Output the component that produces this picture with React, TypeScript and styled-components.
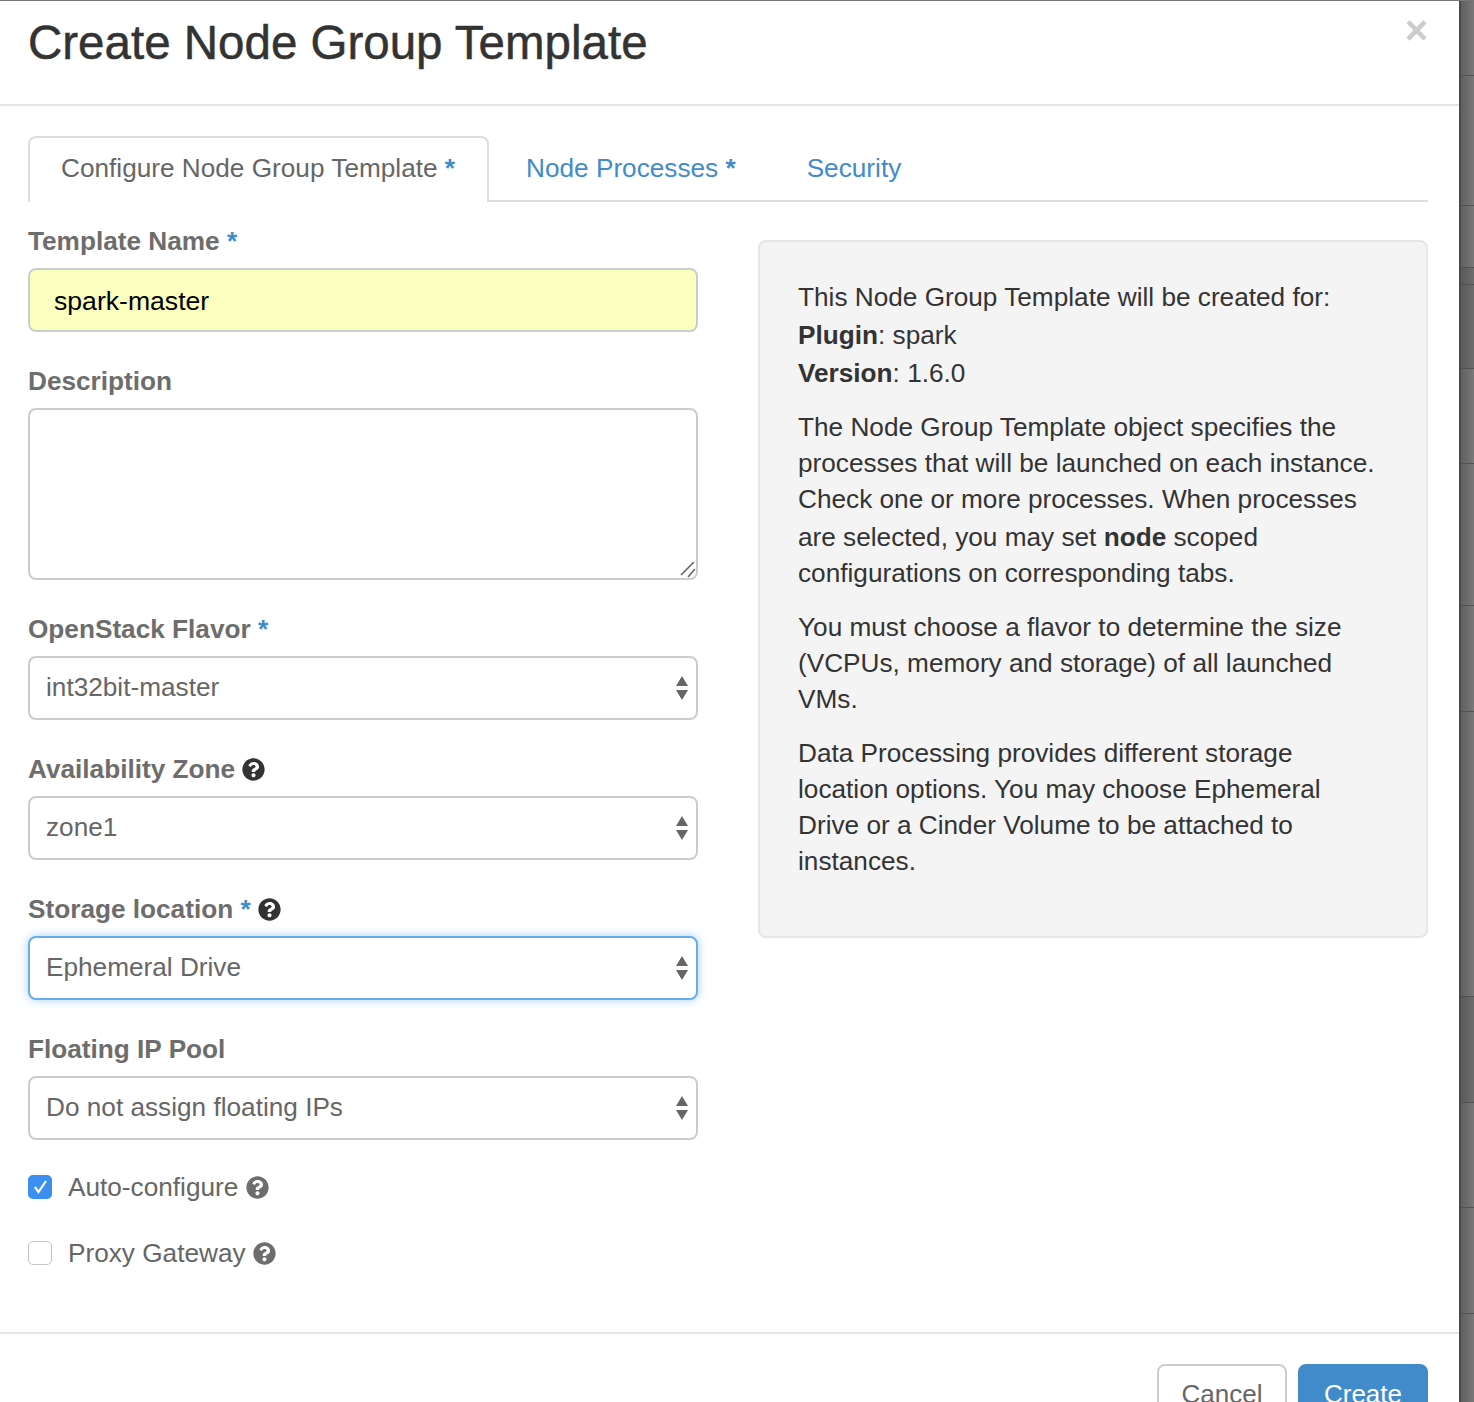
import React from "react";
import styled, { createGlobalStyle } from "styled-components";
import { FaQuestionCircle } from "react-icons/fa";

const GlobalStyle = createGlobalStyle`
	html, body {
		margin: 0;
		padding: 0;
		background: #fff;
	}
	body {
		font-family: "Liberation Sans", Arial, sans-serif;
		color: #333;
		height: 1402px;
		overflow: hidden;
	}
`;

// rows of the page table that show behind the modal
const backdropRows = [
	{ height: 75 },
	{ height: 130 },
	{ height: 62 },
	{ height: 17, dark: true },
	{ height: 84, dark: true },
	{ height: 95 },
	{ height: 142 },
	{ height: 106 },
	{ height: 285 },
	{ height: 106, dark: true },
	{ height: 105 },
	{ height: 106 },
	{ height: 89 },
];

function Help(props: { dark?: boolean }) {
	return (
		<HelpIcon $dark={props.dark}>
			<FaQuestionCircle />
		</HelpIcon>
	);
}

function SelectField(props: { value: string; focused?: boolean }) {
	return (
		<Select $focused={props.focused}>
			<SelectValue>{props.value}</SelectValue>
			<Arrows width="12" height="24" viewBox="0 0 12 24">
				<path d="M6 0 L12 10 H0 Z M0 14 H12 L6 24 Z" fill="#666" />
			</Arrows>
		</Select>
	);
}

export default function App() {
	return (
		<>
			<GlobalStyle />
			<Page>
				<Modal>
					<Header>
						<Title>Create Node Group Template</Title>
						<Close>×</Close>
					</Header>
					<Body>
						<Tabs>
							<Tab $active>
								Configure Node Group Template <Star>*</Star>
							</Tab>
							<Tab>
								Node Processes <Star>*</Star>
							</Tab>
							<Tab>Security</Tab>
						</Tabs>
						<Columns>
							<FormColumn>
								<Group>
									<Label>
										Template Name <Star>*</Star>
									</Label>
									<TextInput>spark-master</TextInput>
								</Group>
								<Group>
									<Label>Description</Label>
									<TextArea>
										<svg width="16" height="16" viewBox="0 0 16 16">
											<path d="M1 13 L14 0 M8 15 L15 7" stroke="#666" strokeWidth="1.6" fill="none" />
										</svg>
									</TextArea>
								</Group>
								<Group>
									<Label>
										OpenStack Flavor <Star>*</Star>
									</Label>
									<SelectField value="int32bit-master" />
								</Group>
								<Group>
									<Label>
										Availability Zone <Help dark />
									</Label>
									<SelectField value="zone1" />
								</Group>
								<Group>
									<Label>
										Storage location <Star>*</Star> <Help dark />
									</Label>
									<SelectField value="Ephemeral Drive" focused />
								</Group>
								<Group>
									<Label>Floating IP Pool</Label>
									<SelectField value="Do not assign floating IPs" />
								</Group>
								<CheckList>
									<CheckRow>
										<CheckBox $checked>
											<svg width="18" height="18" viewBox="0 0 18 18">
												<path d="M4 9 L7.5 14 L15 3" stroke="#fff" strokeWidth="2.2" fill="none" />
											</svg>
										</CheckBox>
										<span>
											Auto-configure <Help />
										</span>
									</CheckRow>
									<CheckRow>
										<CheckBox />
										<span>
											Proxy Gateway <Help />
										</span>
									</CheckRow>
								</CheckList>
							</FormColumn>
							<InfoPanel>
								<Para>
									This Node Group Template will be created for:
									<br />
									<strong>Plugin</strong>: spark
									<br />
									<strong>Version</strong>: 1.6.0
								</Para>
								<Para>
									The Node Group Template object specifies the processes that will be launched on each
									instance. Check one or more processes. When processes are selected, you may set{" "}
									<strong>node</strong> scoped configurations on corresponding tabs.
								</Para>
								<Para>
									You must choose a flavor to determine the size (VCPUs, memory and storage) of all
									launched VMs.
								</Para>
								<Para>
									Data Processing provides different storage location options. You may choose Ephemeral
									Drive or a Cinder Volume to be attached to instances.
								</Para>
							</InfoPanel>
						</Columns>
					</Body>
					<Footer>
						<Button>Cancel</Button>
						<Button $primary>Create</Button>
					</Footer>
				</Modal>
				<Backdrop>
					{backdropRows.map((row, i) => (
						<BackdropRow key={i} $height={row.height} $dark={row.dark} />
					))}
				</Backdrop>
			</Page>
		</>
	);
}

const Page = styled.div`
	display: flex;
	width: 1474px;
	height: 1402px;
	overflow: hidden;
	border-top: 1px solid #777;
	box-sizing: border-box;
`;

const Modal = styled.div`
	width: 1459px;
	flex: none;
	background: #fff;
`;

const Backdrop = styled.div`
	width: 15px;
	flex: none;
	box-sizing: border-box;
	border-left: 2px solid #4a4a4a;
`;

const BackdropRow = styled.div<{ $height: number; $dark?: boolean }>`
	height: ${(p) => p.$height}px;
	box-sizing: border-box;
	border-bottom: 1px solid #505050;
	background: ${(p) =>
		p.$dark
			? "linear-gradient(to right, #5a5a5a, #6c6c6c)"
			: "linear-gradient(to right, #606060, #787878)"};
`;

const Header = styled.div`
	height: 103px;
	padding: 0 28px;
	display: flex;
	justify-content: space-between;
	border-bottom: 2px solid #e5e5e5;
`;

const Title = styled.h4`
	margin: 15px 0 0;
	font-size: 47.5px;
	line-height: 54px;
	font-weight: 400;
	color: #333;
	-webkit-text-stroke: 0.5px #333;
`;

const Close = styled.div`
	margin: 2px 3px 0 0;
	font-size: 40px;
	line-height: 54px;
	font-weight: 700;
	color: #ccc;
`;

const Body = styled.div`
	padding: 30px 31px 0 28px;
	height: 1226px;
	box-sizing: border-box;
`;

const Tabs = styled.div`
	display: flex;
	align-items: flex-start;
	height: 66px;
	box-sizing: border-box;
	border-bottom: 2px solid #ddd;
`;

const Tab = styled.div<{ $active?: boolean }>`
	height: ${(p) => (p.$active ? "66px" : "64px")};
	box-sizing: border-box;
	padding: 12px 32px 0 31px;
	margin-right: 4px;
	font-size: 26.2px;
	line-height: 36px;
	white-space: nowrap;
	color: ${(p) => (p.$active ? "#666" : "#428bca")};
	background: ${(p) => (p.$active ? "#fff" : "transparent")};
	border: 2px solid ${(p) => (p.$active ? "#ddd" : "transparent")};
	border-bottom: none;
	border-radius: 8px 8px 0 0;
`;

const Star = styled.span`
	color: #428bca;
	font-weight: 700;
`;

const Columns = styled.div`
	display: grid;
	grid-template-columns: 670px 670px;
	column-gap: 60px;
	align-items: start;
`;

const FormColumn = styled.div`
	padding-top: 21px;
`;

const Group = styled.div`
	margin-bottom: 31px;
`;

const Label = styled.div`
	height: 36px;
	font-size: 26.2px;
	line-height: 36px;
	font-weight: 700;
	color: #6d6d6d;
	margin-bottom: 9px;
	white-space: nowrap;
`;

const HelpIcon = styled.span<{ $dark?: boolean }>`
	display: inline-block;
	height: 23px;
	font-size: 23px;
	line-height: 23px;
	vertical-align: -3px;
	color: ${(p) => (p.$dark ? "#333" : "#6d6d6d")};
`;

const TextInput = styled.div`
	height: 64px;
	box-sizing: border-box;
	padding: 0 24px;
	font-size: 26.6px;
	line-height: 62px;
	color: #000;
	background: #faffbd;
	border: 2px solid #ccc;
	border-radius: 8px;
`;

const TextArea = styled.div`
	height: 172px;
	box-sizing: border-box;
	border: 2px solid #ccc;
	border-radius: 8px;
	display: flex;
	justify-content: flex-end;
	align-items: flex-end;
`;

const Select = styled.div<{ $focused?: boolean }>`
	height: 64px;
	box-sizing: border-box;
	padding: 0 8px 0 16px;
	display: flex;
	align-items: center;
	justify-content: space-between;
	font-size: 26.2px;
	color: #666;
	background: #fff;
	border: 2px solid ${(p) => (p.$focused ? "#66afe9" : "#ccc")};
	border-radius: 8px;
	box-shadow: ${(p) => (p.$focused ? "0 0 10px rgba(102, 175, 233, 0.6)" : "none")};
`;

const SelectValue = styled.span`
	margin-bottom: 2px;
`;

const Arrows = styled.svg`
	flex: none;
`;

const CheckList = styled.div`
	margin-top: -2px;
`;

const CheckRow = styled.div`
	height: 36px;
	display: flex;
	align-items: center;
	gap: 16px;
	font-size: 26.2px;
	line-height: 36px;
	color: #666;
	margin-bottom: 30px;
	white-space: nowrap;
`;

const CheckBox = styled.span<{ $checked?: boolean }>`
	width: 24px;
	height: 24px;
	box-sizing: border-box;
	display: flex;
	align-items: center;
	justify-content: center;
	border-radius: 5px;
	background: ${(p) => (p.$checked ? "#3a8ff0" : "#fff")};
	border: ${(p) => (p.$checked ? "none" : "1.5px solid #c4c4c4")};
`;

const InfoPanel = styled.div`
	margin-top: 38px;
	height: 698px;
	box-sizing: border-box;
	padding: 37px 38px 0;
	background: #f4f4f4;
	border: 2px solid #e6e6e6;
	border-radius: 8px;
	font-size: 26.2px;
	line-height: 36px;
	color: #333;

	strong::before {
		content: "";
		display: inline-block;
		width: 0;
		height: 29px;
	}
`;

const Para = styled.p`
	margin: 0 0 18px;
`;

const Footer = styled.div`
	border-top: 2px solid #e5e5e5;
	padding: 30px 31px 0 0;
	display: flex;
	justify-content: flex-end;
	gap: 11px;
`;

const Button = styled.div<{ $primary?: boolean }>`
	width: 130px;
	height: 64px;
	box-sizing: border-box;
	padding-top: 10px;
	text-align: center;
	font-size: 26px;
	line-height: 36px;
	border-radius: 8px;
	color: ${(p) => (p.$primary ? "#fff" : "#666")};
	background: ${(p) => (p.$primary ? "#428bca" : "#fff")};
	border: 2px solid ${(p) => (p.$primary ? "#428bca" : "#ccc")};
`;
